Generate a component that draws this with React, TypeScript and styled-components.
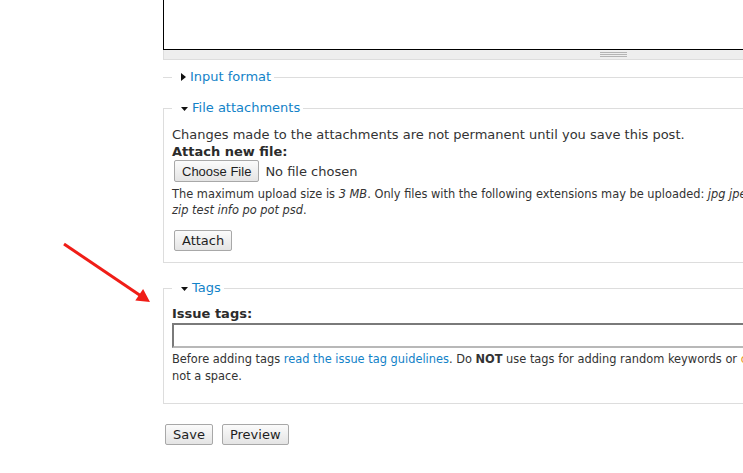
import React from 'react';
import styled, { createGlobalStyle, css } from 'styled-components';

const GlobalStyle = createGlobalStyle`
  html, body { margin: 0; padding: 0; background: #fff; overflow: hidden; }
  body {
    font-family: "DejaVu Sans", Verdana, sans-serif;
    font-size: 13px;
    line-height: 17px;
    color: #333;
  }
`;

const Page = styled.div`
  position: relative;
  width: 743px;
  height: 473px;
  overflow: hidden;
`;

const Form = styled.form`
  margin-left: 163px;
  width: 900px;
  display: flex;
  flex-direction: column;
`;

const TextArea = styled.textarea`
  display: block;
  box-sizing: border-box;
  width: 100%;
  height: 50px;
  margin: 0;
  border: 1px solid #000;
  border-top: none;
  resize: none;
  outline: none;
  font: inherit;
`;

const Grippie = styled.div`
  box-sizing: border-box;
  height: 10px;
  background: #eee;
  border: 1px solid #ddd;
  border-top: none;
  display: flex;
  justify-content: center;
  padding-top: 2px;
`;

const GrippieLines = styled.span`
  width: 27px;
  height: 5px;
  background: repeating-linear-gradient(#b4b4b4 0 1px, transparent 1px 2px);
`;

const Fieldset = styled.fieldset<{ $collapsed?: boolean; $mt: number; $pb?: number }>`
  margin: ${p => p.$mt}px 0 0;
  min-width: 0;
  border: 1px solid #ddd;
  padding: 0 8px ${p => p.$pb ?? 11}px;
  ${p =>
    p.$collapsed &&
    css`
      border-width: 1px 0 0;
      padding: 0 0 0 9px;
    `}
`;

const Legend = styled.legend`
  padding: 0 3px 0 0;
  line-height: 16px;
  font-size: 13px;
`;

const LegendLink = styled.a`
  display: flex;
  align-items: center;
  gap: 4px;
  padding-left: 9px;
  color: #1282c8;
  text-decoration: none;
  cursor: pointer;
`;

const Arrow = styled.svg<{ $down?: boolean }>`
  display: block;
  flex: none;
  margin-top: ${p => (p.$down ? '2px' : '0')};
`;

const Body = styled.div<{ $pt: number }>`
  padding-top: ${p => p.$pt}px;
`;

const Text = styled.p`
  margin: 0;
`;

const Label = styled.label`
  display: block;
  font-weight: bold;
  color: #2b2b2b;
`;

const FileRow = styled.div`
  display: flex;
  align-items: center;
  gap: 6px;
  margin: 0 0 0 2px;
`;

const buttonBase = css`
  box-sizing: border-box;
  height: 21px;
  padding: 0 7px;
  border: 1px solid #a8a8a8;
  border-radius: 2px;
  background: linear-gradient(#fbfbfb, #e4e4e4);
  color: #1e1e1e;
  font-size: 13px;
  line-height: 19px;
  cursor: pointer;
`;

const FileButton = styled.button`
  ${buttonBase}
  height: 22px;
  font-family: "Liberation Sans", Arial, sans-serif;
`;

const Button = styled.button<{ $mt?: number; $ml?: number }>`
  ${buttonBase}
  font-family: "DejaVu Sans", Verdana, sans-serif;
  margin: ${p => p.$mt ?? 0}px 0 0 ${p => p.$ml ?? 0}px;
  align-self: flex-start;
`;

const Description = styled.div<{ $mt: number; $lh: number }>`
  font-size: 11.4px;
  line-height: ${p => p.$lh}px;
  margin-top: ${p => p.$mt}px;
  white-space: nowrap;
`;

const Link = styled.a<{ $orange?: boolean }>`
  color: ${p => (p.$orange ? '#e8950f' : '#1282c8')};
  text-decoration: none;
`;

const TagInput = styled.input`
  display: block;
  box-sizing: border-box;
  width: 100%;
  height: 25px;
  margin: 1px 0 0;
  border: 2px solid;
  border-color: #7a7a7a #b8b8b8 #b8b8b8 #7a7a7a;
  outline: none;
  font: inherit;
`;

const Actions = styled.div`
  display: flex;
  gap: 9px;
  margin: 20px 0 0 2px;
`;

const Annotation = styled.svg`
  position: absolute;
  left: 0;
  top: 0;
  pointer-events: none;
`;

const RightTri = () => (
  <Arrow width="5" height="8" viewBox="0 0 5 8">
    <polygon points="0,0 5,4 0,8" fill="#111" />
  </Arrow>
);

const DownTri = () => (
  <Arrow $down width="7" height="4" viewBox="0 0 7 4">
    <polygon points="0,0 7,0 3.5,4" fill="#111" />
  </Arrow>
);

export default function App() {
  return (
    <Page>
      <GlobalStyle />
      <Form onSubmit={e => e.preventDefault()}>
        <TextArea aria-label="Body" />
        <Grippie>
          <GrippieLines />
        </Grippie>

        <Fieldset $collapsed $mt={9}>
          <Legend>
            <LegendLink>
              <RightTri />
              Input format
            </LegendLink>
          </Legend>
        </Fieldset>

        <Fieldset $mt={15}>
          <Legend>
            <LegendLink>
              <DownTri />
              File attachments
            </LegendLink>
          </Legend>
          <Body $pt={10}>
            <Text>Changes made to the attachments are not permanent until you save this post.</Text>
            <Label>Attach new file:</Label>
            <FileRow>
              <FileButton type="button">Choose File</FileButton>
              <span>No file chosen</span>
            </FileRow>
            <Description $mt={4} $lh={16}>
              The maximum upload size is <em>3 MB</em>. Only files with the following extensions may be
              uploaded: <em>jpg jpeg gif png txt doc xls pdf ppt pps odt ods odp gz tgz patch diff</em>
              <br />
              <em>zip test info po pot psd</em>.
            </Description>
            <Button type="button" $mt={12} $ml={2}>
              Attach
            </Button>
          </Body>
        </Fieldset>

        <Fieldset $mt={17} $pb={19}>
          <Legend>
            <LegendLink>
              <DownTri />
              Tags
            </LegendLink>
          </Legend>
          <Body $pt={9}>
            <Label>Issue tags:</Label>
            <TagInput type="text" aria-label="Issue tags" />
            <Description $mt={3} $lh={16.5}>
              Before adding tags <Link>read the issue tag guidelines</Link>. Do <strong>NOT</strong> use tags
              for adding random keywords or <Link $orange>changelog notes</Link>. Separate terms with a comma,
              <br />
              not a space.
            </Description>
          </Body>
        </Fieldset>

        <Actions>
          <Button type="submit">Save</Button>
          <Button type="button">Preview</Button>
        </Actions>
      </Form>

      <Annotation width="160" height="310" viewBox="0 0 160 310">
        <line x1="64" y1="244" x2="141" y2="296" stroke="#f01d17" strokeWidth="3" />
        <polygon points="150,302 135.3,300.5 143.1,288.9" fill="#f01d17" />
      </Annotation>
    </Page>
  );
}
